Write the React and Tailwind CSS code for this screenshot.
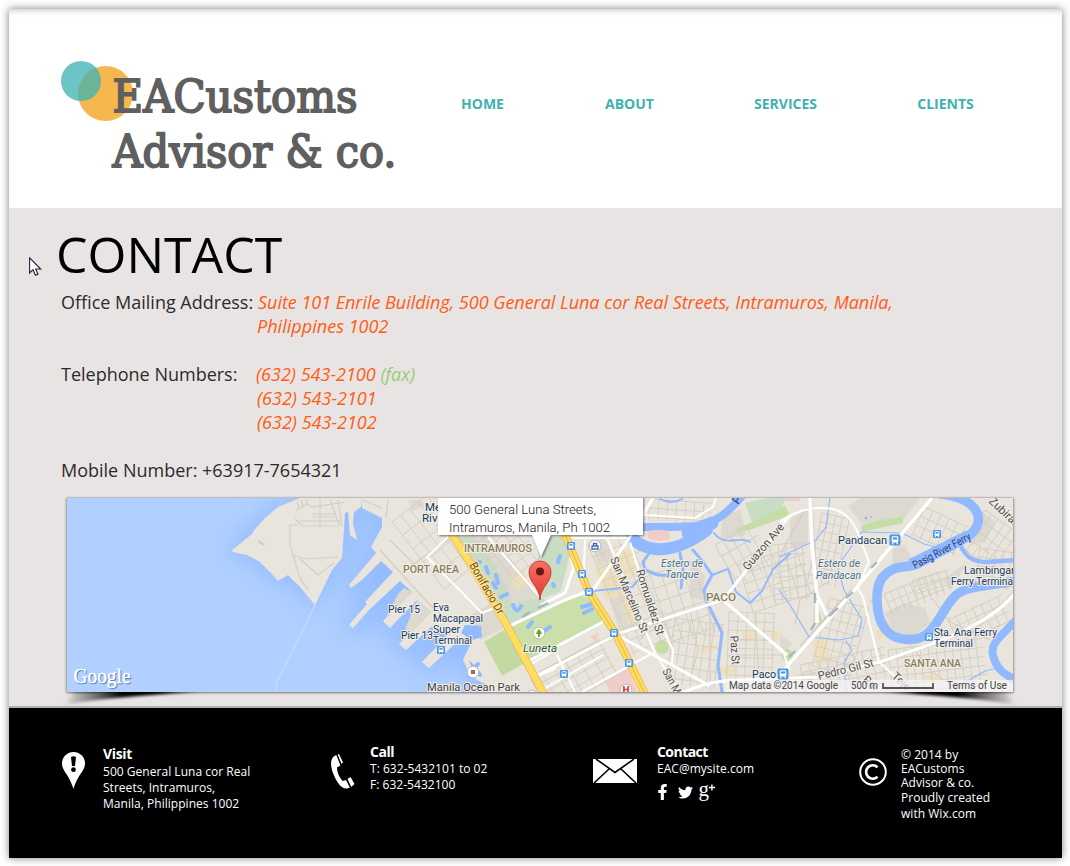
import React from "react";
import { FaFacebookF, FaTwitter } from "react-icons/fa";

const NAV = [
  { label: "HOME", cls: "w-[147px]" },
  { label: "ABOUT", cls: "w-[147px]" },
  { label: "SERVICES", cls: "w-[165px]" },
  { label: "CLIENTS", cls: "w-[155px]" },
];

function Logo() {
  return (
    <svg className="block h-[130px] w-[354px] overflow-visible" viewBox="55 50 354 130">
      <circle cx="105.5" cy="93.5" r="27.5" fill="#f5b74e" />
      <circle cx="81" cy="81" r="20" fill="#3fb1b1" fillOpacity="0.76" />
      <g fontFamily="'DejaVu Serif', serif" fill="#5f5f5f" stroke="#5f5f5f" strokeWidth="1.9">
        <text x="112.5" y="112" fontSize="44" textLength="245" lengthAdjust="spacingAndGlyphs">EACustoms</text>
        <text x="112.5" y="167" fontSize="44" textLength="284" lengthAdjust="spacingAndGlyphs">Advisor &amp; co.</text>
      </g>
    </svg>
  );
}

function Header() {
  return (
    <header className="flex h-[199px] shrink-0 bg-white shadow-[inset_0_5px_6px_-4px_rgba(0,0,0,0.25)]">
      <div className="pt-[41px] pl-[46px]">
        <Logo />
      </div>
      <nav className="flex pt-[85px]">
        {NAV.map((n) => (
          <a key={n.label} className={`${n.cls} text-center text-sm leading-5 font-bold text-[#3fb1b1]`}>
            {n.label}
          </a>
        ))}
      </nav>
    </header>
  );
}

/* Parallel minor streets filling a rotated rectangle. */
function Hatch({ x, y, w, h, a, s = 9, t = 12 }) {
  let d = "";
  for (let i = 0; i <= w; i += s) d += `M${x + i} ${y}V${y + h}`;
  for (let j = 0; j <= h; j += t) d += `M${x} ${y + j}H${x + w}`;
  return <path d={d} transform={`rotate(${a} ${x} ${y})`} />;
}

function Label({ x, y, w, children, size = 11.5, fill = "#16395f", rot, ...rest }) {
  return (
    <text
      x={x}
      y={y}
      fontSize={size}
      fill={fill}
      stroke="#f2efe9"
      strokeWidth="2.2"
      strokeLinejoin="round"
      paintOrder="stroke"
      textLength={w}
      lengthAdjust="spacingAndGlyphs"
      transform={rot ? `rotate(${rot} ${x} ${y})` : undefined}
      {...rest}
    >
      {children}
    </text>
  );
}

function Stop({ x, y, s = 8 }) {
  return (
    <g transform={`translate(${x - s / 2} ${y - s / 2}) scale(${s / 8})`}>
      <rect width="8" height="8" rx="1.2" fill="#4a97ea" />
      <rect x="1.6" y="1.3" width="4.8" height="4.6" rx="0.8" fill="#fff" />
      <rect x="2.4" y="2.1" width="3.2" height="1.6" fill="#4a97ea" />
      <path d="M2.4 5.9V7M5.6 5.9V7" stroke="#fff" strokeWidth="1" />
    </g>
  );
}

const SOUTH_WEST_LAND =
  "M300 498L278 507L265 518L255 529L252 534L231 551L237 553L247 555L260 562L270 572L278 581L288 575L300 587L315 605L332 570L342 558L344 530L345 513L348 512L350 535L357 540L353 523L354 512L361 507L362 498Z";
const MAIN_LAND =
  "M362 498L362 508L382 518L382 527L371 547L376 553L349 585L351 588L362 580L381 561L393 572L365 602L367 604L349 625L353 628L369 610L400 581L412 592L383 621L390 628L417 600L431 612L399 644L406 650L431 627L451 632L422 662L429 668L457 642L475 641L481 637L477 625L467 625L478 630L470 645L463 660L470 675L482 683L490 692H1013V498Z";

function Map() {
  return (
    <svg className="block h-[205px] w-[960px] shrink-0 overflow-visible" viewBox="60 498 960 205" fontFamily="Roboto, sans-serif">
      <defs>
        <clipPath id="frame">
          <rect x="67" y="498" width="946" height="194" />
        </clipPath>
        <clipPath id="ground">
          <path d={MAIN_LAND} />
        </clipPath>
        <filter id="soft" x="-20%" y="-60%" width="140%" height="220%">
          <feGaussianBlur stdDeviation="2.6 1.6" />
        </filter>
        <filter id="haze" x="-20%" y="-20%" width="140%" height="140%">
          <feGaussianBlur stdDeviation="12" />
        </filter>
        <filter id="edge" x="-5%" y="-10%" width="110%" height="120%">
          <feGaussianBlur stdDeviation="1.2" />
        </filter>
        <linearGradient id="pin" x1="0" y1="0" x2="0" y2="1">
          <stop offset="0" stopColor="#fb7064" />
          <stop offset="1" stopColor="#e03c31" />
        </linearGradient>
        <linearGradient id="liftLeft" gradientUnits="userSpaceOnUse" x1="66" y1="0" x2="200" y2="0">
          <stop offset="0" stopOpacity="0.05" />
          <stop offset="0.22" stopOpacity="0.5" />
          <stop offset="0.42" stopOpacity="1" />
          <stop offset="0.7" stopOpacity="1" />
          <stop offset="1" stopOpacity="0" />
        </linearGradient>
        <linearGradient id="liftRight" gradientUnits="userSpaceOnUse" x1="1014" y1="0" x2="880" y2="0">
          <stop offset="0" stopOpacity="0.05" />
          <stop offset="0.22" stopOpacity="0.5" />
          <stop offset="0.42" stopOpacity="1" />
          <stop offset="0.7" stopOpacity="1" />
          <stop offset="1" stopOpacity="0" />
        </linearGradient>
      </defs>

      <path d="M66 705Q110 696 200 692.5V688H76Z" fill="url(#liftLeft)" filter="url(#soft)" />
      <path d="M1014 705Q970 696 880 692.5V688H1004Z" fill="url(#liftRight)" filter="url(#soft)" />
      <rect x="66.5" y="498" width="947" height="195" fill="#000" opacity="0.5" filter="url(#edge)" />

      <g clipPath="url(#frame)">
        <rect x="67" y="498" width="946" height="194" fill="#b1d0ff" />
        <path d={SOUTH_WEST_LAND} fill="#8fb8ff" stroke="#8fb8ff" strokeWidth="10" filter="url(#haze)" opacity="0.8" />
        <path d={MAIN_LAND} fill="#8fb8ff" stroke="#8fb8ff" strokeWidth="14" filter="url(#haze)" opacity="0.85" />
        <path d="M315 605L276 684V692" fill="none" stroke="#d3e0f2" strokeWidth="1" />
        <path d={SOUTH_WEST_LAND} fill="#e9e5dc" />
        <path d={MAIN_LAND} fill="#e9e5dc" />

        <g fill="#ddd8d0">
          <path d="M452 536L505 630L548 604L490 537Z" />
          <path d="M470 615L490 604L504 628L480 640Z" />
          <path d="M590 540L606 540L645 630L620 632Z" />
          <path d="M408 500H422L424 506L412 511ZM398 594L404 588L412 592L386 618ZM417 600L431 612L404 640L402 637Z" />
          <path d="M790 520L808 508V545L790 548ZM848 506L860 498H920L905 518L868 531Z" />
          <path d="M884 613L905 603L925 608L930 623L915 635H896Z" />
          <path d="M690 560L705 575L702 600L690 597ZM942 580L968 562L950 590Z" />
          <path d="M893 548L905 545L915 563L892 567ZM980 510L995 522L985 542L970 545Z" />
          <path d="M723 515L740 510L746 535L720 540ZM780 635L792 643L782 659Z" />
        </g>
        <g fill="#f0e0b6" opacity="0.8">
          <path d="M510 578L524 570L529 584L517 590Z" />
          <path d="M594 570L612 560L625 595L605 600ZM615 552L630 548L637 575L623 582ZM620 600L634 597L643 620L628 624Z" />
          <path d="M742 630H756V641H742ZM698 649L724 643V648L700 653ZM718 667H735V675H718ZM770 630L784 633L775 643Z" />
          <path d="M813 640L827 638L830 662L816 665ZM876 630L886 630L880 642ZM925 675H938V683H927Z" />
        </g>
        <g fill="#efcdc8">
          <path d="M605 682L628 668L637 692H610ZM590 637L598 632L597 642ZM780 498H800V501H780Z" />
        </g>
        <g fill="#c9dcc4">
          <path d="M462 537L472 537L489 556L500 575L513 603L540 598L551 604L510 625L487 590L476 566Z" />
          <path d="M541 537H563L570 552L565 575L560 592L543 598L536 570Z" />
          <path d="M745 503L768 498H785L780 515L752 523Z" />
        </g>
        <path d="M510 628L551 607L577 594L592 600L607 622L531 661Z" fill="#cbdfaa" />
        <path d="M484 642L504 630L525 663L502 676Z" fill="#c0daa2" />
        <g fill="#c5dea6">
          <path d="M733 530L760 519L785 506L790 515L747 531Z" />
          <path d="M861 526L880 520L903 517V523L862 532ZM817 605L822 620L818 627Z" />
          <circle cx="662" cy="647" r="7" />
          <circle cx="787" cy="655" r="6" />
        </g>

        <g clipPath="url(#ground)" fill="none" stroke="#d4cec3" strokeWidth="0.9">
          <Hatch x={392} y={522} w={66} h={85} a={-38} s={11} t={17} />
          <Hatch x={474} y={545} w={46} h={56} a={-38} s={10} t={10} />
          <Hatch x={530} y={678} w={80} h={40} a={-29} s={13} t={10} />
          <Hatch x={588} y={545} w={45} h={120} a={-23} s={10} t={13} />
          <Hatch x={650} y={575} w={45} h={75} a={-18} s={11} t={14} />
          <Hatch x={675} y={618} w={50} h={65} a={8} s={8} t={12} />
          <Hatch x={729} y={612} w={46} h={74} a={2} s={9} t={9} />
          <Hatch x={650} y={499} w={62} h={21} a={4} s={9} t={9} />
          <Hatch x={715} y={545} w={43} h={48} a={-30} s={9} t={13} />
          <Hatch x={738} y={565} w={65} h={50} a={-18} s={12} t={10} />
          <Hatch x={770} y={545} w={35} h={58} a={-5} s={8} t={11} />
          <Hatch x={822} y={513} w={28} h={70} a={12} s={7} t={9} />
          <Hatch x={830} y={598} w={40} h={70} a={15} s={8} t={10} />
          <Hatch x={884} y={594} w={58} h={24} a={-22} s={7} t={9} />
          <Hatch x={912} y={580} w={38} h={20} a={-15} s={7} t={7} />
          <Hatch x={925} y={507} w={48} h={32} a={25} s={9} t={10} />
          <Hatch x={985} y={510} w={40} h={45} a={35} s={8} t={11} />
          <Hatch x={888} y={650} w={95} h={50} a={-7} s={8} t={9} />
          <Hatch x={948} y={620} w={60} h={27} a={-25} s={9} t={9} />
          <Hatch x={980} y={548} w={35} h={38} a={8} s={8} t={9} />
          <Hatch x={800} y={665} w={85} h={30} a={-12} s={9} t={8} />
        </g>
        <g fill="none" stroke="#d4cec3" strokeWidth="1.2">
          <path d="M296 510L307 504L312 507L345 502M299 507L297 502M303 506L301 500M308 505L306 499M295 519L303 526H338M298 525H290V545L294 558C297 570 300 582 309 590M294 556L306 559L338 557M300 559L318 575L334 563M320 498V526M330 500L340 526M312 514H335M312 517H335M338 500L342 526M300 521H340" />
          <path d="M388 500L386 518M363 500L382 508M405 570L470 525M380 550L430 605L448 620M390 540L420 570" />
          <path d="M258 541L264 545" strokeWidth="2.5" />
          <path d="M805 510L785 545L775 570M828 582L800 600L795 625M870 600L900 640M907 640L930 670L960 692M932 598L950 622L990 640M970 640L1000 625" />
          <path d="M710 610V690M755 615L760 690M730 640H775M728 655H782M690 610L698 650L690 680M640 640L652 625L672 620" />
        </g>

        <g fill="none" stroke="#91b9ff" strokeLinecap="round" strokeLinejoin="round">
          <path d="M630 527H672L697 526C718 522 728 512 742 496" strokeWidth="8" />
          <path d="M632 538C648 554 675 554 707 530" strokeWidth="12" />
          <path d="M688 533L712 523" strokeWidth="13" />
          <path d="M940 494C973 497 988 516 972 533C960 543 936 553 921 562C908 571 896 561 882 578C874 590 876 617 885 629C895 642 918 643 929 632C940 621 945 606 955 596C965 586 987 586 1016 581" strokeWidth="9.5" />
          <path d="M960 544C966 559 975 562 988 562L1016 560" strokeWidth="4.5" />
          <path d="M1016 620C1000 638 990 643 993 655C997 671 1005 674 1017 681" strokeWidth="8" />
          <path d="M652 549L643 562L645 570L658 575L680 576M680 553L683 570L681 588M693 550L703 562L712 575L704 590L706 600L722 633L718 665L722 692" strokeWidth="3" />
          <path d="M593 591L632 587L643 575M712 575L728 569L736 592L750 603L762 591L773 569L790 554M714 533C725 548 740 535 750 542M660 499Q671 505 682 499" strokeWidth="1.9" />
          <path d="M830 498L826 527L816 540L780 557M838 569L844 590L862 620L858 636L840 640L809 637L790 605L779 590M846 641L852 650L844 662L846 692M861 532L902 533L924 544L936 547M861 533L842 560M952 690L985 671L1002 667" strokeWidth="1.2" />
          <path d="M476 563L480 562M486 567L488 573M496 575L498 583M493 583L496 588M501 597L507 594M513 605Q517 615 521 606M528 627L532 622M558 562L560 556M554 586L553 584M582 607L592 604M584 613L592 609M544 631L550 627M478 664L474 668L480 675" strokeWidth="4" />
        </g>
        <path d="M647 531Q658 529 669 531L670 539Q658 543 648 538Z" fill="#efcdc8" />
        <g fill="#91b9ff">
          <path d="M465 625L481 626L482 637L472 640L461 633ZM469 660L477 668L474 675ZM477 681L486 684L482 690Z" />
          <circle cx="866" cy="518" r="1.5" />
          <circle cx="871" cy="517" r="1" />
        </g>

        <g fill="none" stroke="#c9c2b6" strokeWidth="4.2" opacity="0.45">
          <path d="M810 498L817 600L815 623M932 498L857 587L775 680M1013 593C1000 612 975 627 937 642L880 662L780 680M723 600L620 633L540 673" />
        </g>
        <g fill="none" stroke="#fff" strokeLinejoin="round">
          <path d="M810 498L812 545L817 595L827 615M817 600V623M932 498L857 587L775 680" strokeWidth="3.6" />
          <path d="M1016 592C1000 612 975 627 937 642L880 662L817 677L740 680C722 680 700 684 680 694" strokeWidth="3.2" />
          <path d="M790 515L723 600L787 655M723 600L620 633L536 676M603 622L527 662M617 635L710 686M653 498L628 540L593 590M507 627L565 600L588 591M574 567L565 593L541 605M570 545L573 567" strokeWidth="3" />
          <path d="M448 537L427 557L482 613L499 606M488 537L540 597M607 538L655 653L680 692M630 542L645 590L668 640L673 650L672 664M653 653L578 694M568 538H629M585 540L583 587M643 515L695 518L713 507L716 498M780 522Q798 508 823 508Q848 508 858 533L869 562L857 587L863 597L879 662L907 687M530 665L552 652M536 677L556 668M557 655L575 692M542 690L603 655" strokeWidth="2" />
          <path d="M784 655L790 670M780 650L786 655" strokeWidth="2" />
        </g>
        <g fill="none">
          <path d="M448 528L472 566L505 622L545 696M562 527L588 590L615 633L646 696" stroke="#e9bc49" strokeWidth="8" />
          <path d="M448 528L472 566L505 622L545 696" stroke="#ffdd65" strokeWidth="6.5" />
          <path d="M562 527L588 590L615 633L646 696" stroke="#ffdb62" strokeWidth="6.4" />
          <path d="M562 527L588 590L615 633L646 696" stroke="#e8b53d" strokeWidth="1" />
          <path d="M852 589L800 646" stroke="#b9b3a9" strokeWidth="0.8" />
          <path d="M522 617L530 612M538 608L548 603M877 562L871 568M853 592L846 598M838 608L829 616M815 593V603M815 623L811 630M795 651L789 657" stroke="#a9b5bf" strokeWidth="2.4" />
        </g>
        <path d="M910 563C923 557 945 545 968 534" fill="none" stroke="#91b9ff" strokeWidth="8" />

        <Label x={425} y={511}>Me</Label>
        <Label x={422} y={522}>Rive</Label>
        <Label x={464} y={552} w={68} size={11} fill="#8b7d5c" fontWeight="500">INTRAMUROS</Label>
        <Label x={403} y={573} w={56} size={11} fill="#8b7d5c" fontWeight="500">PORT AREA</Label>
        <Label x={388} y={613} w={32}>Pier 15</Label>
        <Label x={401} y={639} w={32}>Pier 13</Label>
        <Label x={433} y={611} w={16}>Eva</Label>
        <Label x={433} y={622} w={50}>Macapagal</Label>
        <Label x={433} y={633} w={27}>Super</Label>
        <Label x={433} y={644} w={39}>Terminal</Label>
        <Label x={427} y={691} w={93} fill="#3f4045">Manila Ocean Park</Label>
        <Label x={469} y={565} w={58} rot={60} fill="#70461d" stroke="#ffe58e">Bonifacio Dr</Label>
        <Label x={523} y={652} w={34} fill="#315f36" fontStyle="italic">Luneta</Label>
        <Label x={610} y={559} w={81} rot={67} fill="#505050">San Marcelino St</Label>
        <Label x={636} y={571} w={68} rot={72} fill="#505050">Romualdez St</Label>
        <Label x={662} y={671} w={27} rot={62} fill="#505050">San M</Label>
        <Label x={661} y={567} w={42} fill="#48718f" fontStyle="italic">Estero de</Label>
        <Label x={665} y={578} w={34} fill="#48718f" fontStyle="italic">Tanque</Label>
        <Label x={818} y={567} w={42} fill="#48718f" fontStyle="italic">Estero de</Label>
        <Label x={816} y={579} w={45} fill="#48718f" fontStyle="italic">Pandacan</Label>
        <Label x={706} y={601} w={30} size={11} fill="#8b7d5c" fontWeight="500">PACO</Label>
        <Label x={904} y={667} w={57} size={11} fill="#8b7d5c" fontWeight="500">SANTA ANA</Label>
        <Label x={748} y={571} w={57} rot={-50} fill="#505050">Guazon Ave</Label>
        <Label x={730} y={636} w={29} rot={86} fill="#505050">Paz St</Label>
        <Label x={738} y={505} rot={-55} stroke="#91b9ff" strokeWidth="1">Pa</Label>
        <Label x={838} y={544} w={49}>Pandacan</Label>
        <Label x={752} y={678} w={24}>Paco</Label>
        <Label x={819} y={680} w={57} rot={-14} fill="#505050">Pedro Gil St</Label>
        <Label x={891} y={677} rot={43} fill="#505050">Teje</Label>
        <Label x={862} y={681} rot={40} fill="#505050">Rai</Label>
        <Label x={915} y={569} w={64} rot={-28} size={11} fill="#293d78" stroke="#91b9ff" strokeWidth="1">Pasig River Ferry</Label>
        <Label x={988} y={502} rot={43} fill="#505050">Zubiran</Label>
        <Label x={964} y={574} w={53}>Lambingan</Label>
        <Label x={951} y={585} w={62}>Ferry Termina</Label>
        <Label x={934} y={636} w={63}>Sta. Ana Ferry</Label>
        <Label x={934} y={647} w={39}>Terminal</Label>

        <Stop x={441} y={650} />
        <Stop x={571} y={546} />
        <Stop x={582} y={574} />
        <Stop x={589} y={592} />
        <Stop x={614} y={633} />
        <Stop x={629} y={663} />
        <Stop x={564} y={674} />
        <Stop x={937} y={534} />
        <Stop x={929} y={637} />
        <Stop x={895} y={540} s={11} />
        <Stop x={783} y={674} s={11} />
        <g stroke="#a7a7a7" strokeWidth="0.7" fill="#fff">
          <circle cx="473" cy="672" r="5.8" />
          <circle cx="539" cy="633" r="5.8" />
          <circle cx="595" cy="546" r="5.8" />
          <circle cx="626" cy="690" r="5.8" />
          <circle cx="532" cy="696" r="5.8" />
        </g>
        <rect x="471" y="670" width="4" height="4" fill="#9b6c4e" />
        <path d="M539 629.5L541.5 633.5H539.5V636.5H538.5V633.5H536.5Z" fill="#6aaa00" stroke="#6aaa00" />
        <path d="M592 546H598V549H592ZM593.5 546V543.5H596.5V546" fill="none" stroke="#416fb5" strokeWidth="1.4" />
        <text x="622.5" y="694" fontSize="10" fontWeight="900" fill="#df403b">H</text>

        <path d="M540 600C539 586 529 583 529 572A11 11 0 0 1 551 572C551 583 541 586 540 600Z" fill="url(#pin)" stroke="#b83229" strokeWidth="0.8" />
        <circle cx="540" cy="571.5" r="4" fill="#651914" />

        <path d="M438 490H643V535H551L541 557L532 535H438Z" fill="#000" opacity="0.5" transform="translate(1 1)" filter="url(#edge)" />
        <path d="M438 490H643V535H551L541 557L532 535H438Z" fill="#fff" />
        <g fontSize="13" fontWeight="300" fill="#202020">
          <text x="449" y="514" textLength="147" lengthAdjust="spacingAndGlyphs">500 General Luna Streets,</text>
          <text x="449" y="532" textLength="161" lengthAdjust="spacingAndGlyphs">Intramuros, Manila, Ph 1002</text>
        </g>

        <rect x="725" y="680" width="288" height="12" fill="#f5f5f5" opacity="0.73" />
        <g fontSize="10" fill="#444">
          <text x="729" y="689" textLength="109" lengthAdjust="spacingAndGlyphs">Map data ©2014 Google</text>
          <text x="851" y="689" textLength="27" lengthAdjust="spacingAndGlyphs">500 m</text>
          <text x="947" y="689" textLength="60" lengthAdjust="spacingAndGlyphs">Terms of Use</text>
        </g>
        <path d="M883 683V688H933V683" fill="none" stroke="#555" strokeWidth="1.8" />
        <g fontFamily="'Liberation Serif', serif" fontSize="21">
          <text x="74.5" y="683.5" textLength="57" lengthAdjust="spacingAndGlyphs" fill="#6586b3" stroke="#6586b3" strokeWidth="0.5">Google</text>
          <text x="73.5" y="682.5" textLength="57" lengthAdjust="spacingAndGlyphs" fill="#fff" stroke="#fff" strokeWidth="0.4">Google</text>
        </g>
      </g>
    </svg>
  );
}

function Contact() {
  return (
    <main className="flex h-[500px] shrink-0 flex-col border-b-2 border-[#b3afae] bg-[#e8e4e3] pl-[51px]">
      <h1 className="-ml-1 mt-[12px] h-[70px] shrink-0 text-[50px] leading-[68px] text-black">CONTACT</h1>
      <div className="grid shrink-0 grid-cols-[197px_1fr] pl-px text-lg leading-6 text-[#ff5c15]">
        <span className="whitespace-nowrap text-[#2b2b2b]">Office Mailing Address:</span>
        <address className="tracking-[-0.025px] italic">
          Suite 101 Enrile Building, 500 General Luna cor Real Streets, Intramuros, Manila,
          <br />
          <span className="-ml-px tracking-[0.03px]">Philippines 1002</span>
        </address>
        <span className="mt-6 text-[#2b2b2b]">Telephone Numbers:</span>
        <div className="mt-6 -ml-0.5 italic">
          <p>(632) 543-2100 <span className="text-[#9bca7b]">(fax)</span></p>
          <p className="pl-px">(632) 543-2101</p>
          <p className="pl-px">(632) 543-2102</p>
        </div>
        <p className="col-span-2 mt-6 text-[#2b2b2b]">Mobile Number: +63917-7654321</p>
      </div>
      <div className="mt-4 shrink-0">
        <Map />
      </div>
    </main>
  );
}

function Footer() {
  return (
    <footer className="flex h-[150px] shrink-0 bg-black pl-[52px] text-xs leading-4 tracking-[0.03px] text-white">
      <section className="flex w-[269px]">
        <svg className="mt-[43px] h-[38px] w-[25px]" viewBox="0 0 25 38">
          <path d="M12.5 1A11.5 11.5 0 0 0 1 12.5C1 20 8 23 12.5 38C17 23 24 20 24 12.5A11.5 11.5 0 0 0 12.5 1Z" fill="#fff" />
          <path d="M10 6Q12.5 4.5 15 6L14 15H11Z" fill="#000" />
          <circle cx="12.5" cy="18.7" r="2.4" fill="#000" />
        </svg>
        <div className="pl-[17px] pt-[37px]">
          <h2 className="h-[19px] text-sm leading-[18px] font-bold tracking-[-0.35px]">Visit</h2>
          <p className="whitespace-nowrap">500 General Luna cor Real<br />Streets, Intramuros,<br />Manila, Philippines 1002</p>
        </div>
      </section>
      <section className="flex w-[263px]">
        <svg className="mt-[45px] h-[36px] w-[25px]" viewBox="0 0 25 36">
          <path d="M6.5 2C0 4 0 12 3 20C6 28 11 36 17 35.5L20 34.5L16 27L12.5 28C9 24 7 19 7 14.5L10.5 12.5Z" fill="#fff" />
          <path d="M7.6 1.5L9 1L13 9.5L11.5 11ZM17.5 26L21.3 34L24.5 31L20.5 24Z" fill="#fff" />
          <path d="M6.6 1.5L11.3 12M16.2 26L20.7 35" stroke="#000" strokeWidth="0.7" />
        </svg>
        <div className="pl-[15px] pt-[35px]">
          <h2 className="h-[18px] text-sm leading-[18px] font-bold tracking-[-0.45px]">Call</h2>
          <p>T: 632-5432101 to 02<br />F: 632-5432100</p>
        </div>
      </section>
      <section className="flex w-[266px]">
        <svg className="mt-[51px] h-[24px] w-[44px]" viewBox="0 0 44 24">
          <rect width="44" height="24" fill="#fff" />
          <path d="M3 0L22 13.5L41 0M1 24L16 10M43 24L28 10" fill="none" stroke="#000" strokeWidth="1.6" />
        </svg>
        <div className="pl-[20px] pt-[35px]">
          <h2 className="h-[18px] text-sm leading-[18px] font-bold tracking-[-0.55px]">Contact</h2>
          <p>EAC@mysite.com</p>
          <div className="flex items-center pt-[6px]">
            <FaFacebookF className="h-4 w-[11px]" />
            <FaTwitter className="ml-[10px] h-[15px] w-[15px]" />
            <svg className="ml-[5px] h-[18px] w-[18px] overflow-visible" viewBox="0 0 18 18">
              <text x="0.5" y="12.5" fontSize="21" fontFamily="'Liberation Serif', serif" fill="#fff">g</text>
              <path d="M10.8 4.5H17M13.9 1.5V7.5" stroke="#fff" strokeWidth="1.4" />
            </svg>
          </div>
        </div>
      </section>
      <section className="flex">
        <svg className="mt-[50px] h-[28px] w-[28px]" viewBox="0 0 28 28" fill="none" stroke="#fff">
          <circle cx="14" cy="14" r="12.8" strokeWidth="2" />
          <path d="M18.5 9.2A6.7 6.7 0 1 0 18.5 18.8" strokeWidth="2.6" />
        </svg>
        <div className="whitespace-nowrap pl-[14px] pt-[40px]">
          <p className="leading-[14px]">© 2014 by<br />EACustoms<br />Advisor &amp; co.</p>
          <p>Proudly created<br />with Wix.com</p>
        </div>
      </section>
    </footer>
  );
}

export default function App() {
  return (
    <div className="relative h-[866px] w-[1070px] overflow-hidden bg-white pt-[9px] pl-[9px] font-['Open_Sans',sans-serif]">
      <div className="flex w-[1053px] flex-col shadow-[0_0_8px_rgba(0,0,0,0.5)]">
        <Header />
        <Contact />
        <Footer />
      </div>
      <svg className="absolute top-[257px] left-[29px] h-[20px] w-[13px]" viewBox="0 0 13 20">
        <path d="M.6.8V16L4 12.8L6.5 18.3L9 17.2L6.7 12H11.7Z" fill="#fff" stroke="#1d2238" strokeWidth="1.1" />
      </svg>
    </div>
  );
}
